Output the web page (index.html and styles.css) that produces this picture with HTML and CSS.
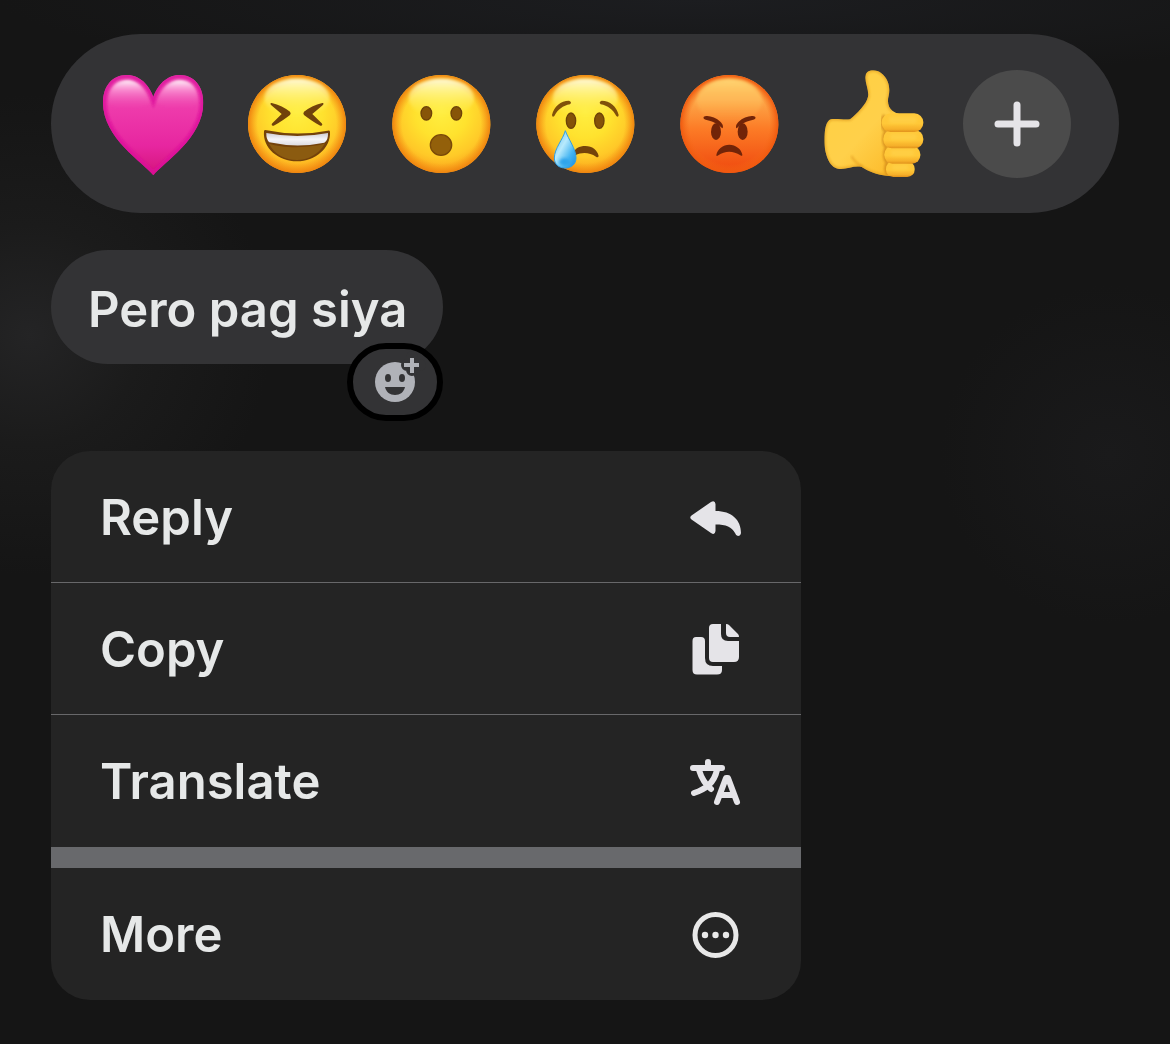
FILE: index.html
```html
<!DOCTYPE html>
<html lang="en">
<head>
<meta charset="utf-8">
<meta name="viewport" content="width=device-width, initial-scale=1">
<title>Message actions</title>
<link rel="stylesheet" href="styles.css">
</head>
<body>
<main class="screen">
  <div class="reactions" role="group" aria-label="Reactions">
    <button class="reaction" type="button" aria-label="Love">
      <svg viewBox="27 30 324 324" aria-hidden="true">
        <defs>
          <linearGradient id="heart" x1="0" y1="0" x2="0" y2="1"><stop offset="0" stop-color="#f060b8"/><stop offset=".35" stop-color="#ee3aab"/><stop offset=".7" stop-color="#e726a0"/><stop offset="1" stop-color="#d31479"/></linearGradient>
          <linearGradient id="heartShine" x1="0" y1="0" x2="0" y2="1"><stop offset="0" stop-color="#fff" stop-opacity=".95"/><stop offset=".35" stop-color="#ffb0e2" stop-opacity=".6"/><stop offset="1" stop-color="#f050b4" stop-opacity="0"/></linearGradient>
          <filter id="soft" x="-20%" y="-20%" width="140%" height="140%"><feGaussianBlur stdDeviation="4"/></filter>
          <filter id="edge" x="-10%" y="-10%" width="120%" height="120%"><feGaussianBlur stdDeviation="3"/></filter>
          <clipPath id="heartClip"><path d="M190 346C160 307 39 235 39 128C39 78 68 45 110 45C150 45 178 76 190 111C202 76 230 45 269 45C311 45 340 78 340 128C340 235 220 307 190 346Z"/></clipPath>
          <radialGradient id="yellow" cx=".5" cy=".38" r=".66"><stop offset="0" stop-color="#ffee40"/><stop offset=".4" stop-color="#ffe22e"/><stop offset=".7" stop-color="#ffc928"/><stop offset=".9" stop-color="#fba61c"/><stop offset="1" stop-color="#f18b14"/></radialGradient>
          <radialGradient id="rim" cx=".5" cy=".5" r=".5"><stop offset=".8" stop-color="#f69818" stop-opacity="0"/><stop offset="1" stop-color="#ef850f"/></radialGradient>
          <linearGradient id="shine" x1="0" y1="0" x2="0" y2="1"><stop offset="0" stop-color="#fffde2" stop-opacity=".95"/><stop offset=".5" stop-color="#fff795" stop-opacity=".5"/><stop offset="1" stop-color="#fff04a" stop-opacity="0"/></linearGradient>
          <linearGradient id="teeth" x1="0" y1="0" x2="0" y2="1"><stop offset="0" stop-color="#cfcdd2"/><stop offset=".5" stop-color="#f6f5f8"/><stop offset="1" stop-color="#dcdbe0"/></linearGradient>
          <linearGradient id="tear" x1="0" y1="0" x2="1" y2="1"><stop offset="0" stop-color="#55b9f0"/><stop offset=".4" stop-color="#b8eafc"/><stop offset=".7" stop-color="#45b5f2"/><stop offset="1" stop-color="#168be0"/></linearGradient>
          <linearGradient id="angry" x1="0" y1="0" x2="0" y2="1"><stop offset="0" stop-color="#fda73d"/><stop offset=".25" stop-color="#fda94a"/><stop offset=".55" stop-color="#fc7b26"/><stop offset="1" stop-color="#ef480e"/></linearGradient>
          <radialGradient id="angryRim" cx=".5" cy=".5" r=".5"><stop offset=".82" stop-color="#f56a18" stop-opacity="0"/><stop offset="1" stop-color="#f0590f"/></radialGradient>
          <linearGradient id="angryShine" x1="0" y1="0" x2="0" y2="1"><stop offset="0" stop-color="#ffd774"/><stop offset="1" stop-color="#ffae48" stop-opacity="0"/></linearGradient>
          <linearGradient id="hand" x1="0" y1="0" x2="1" y2="1"><stop offset="0" stop-color="#ffd040"/><stop offset=".5" stop-color="#ffd04a"/><stop offset=".75" stop-color="#fdbf31"/><stop offset="1" stop-color="#eb9a1c"/></linearGradient>
          <linearGradient id="finger" x1="0" y1="0" x2="0" y2="1"><stop offset="0" stop-color="#ffc93a"/><stop offset=".55" stop-color="#ffc838"/><stop offset=".85" stop-color="#f6b02a"/><stop offset="1" stop-color="#e0901a"/></linearGradient>
        </defs>
        <g clip-path="url(#heartClip)">
          <path fill="url(#heart)" d="M30 40H350V350H30Z"/>
          <path fill="url(#heartShine)" filter="url(#soft)" d="M56 132C52 88 76 60 112 60C148 60 168 92 182 127C150 150 80 150 56 132ZM198 127C212 92 232 60 270 60C306 60 328 88 323 132C298 150 230 150 198 127Z"/>
          <path fill="none" stroke="#dc109b" stroke-width="22" filter="url(#edge)" opacity=".75" d="M190 346C160 307 39 235 39 128C39 78 68 45 110 45C150 45 178 76 190 111C202 76 230 45 269 45C311 45 340 78 340 128C340 235 220 307 190 346Z"/>
        </g>
      </svg>
    </button>
    <button class="reaction" type="button" aria-label="Haha">
      <svg viewBox="24 30 324 324" aria-hidden="true">
        <circle cx="186" cy="192" r="147" fill="url(#yellow)"/><circle cx="186" cy="192" r="147" fill="url(#rim)"/>
        <ellipse cx="186" cy="114" rx="98" ry="58" fill="url(#shine)" filter="url(#soft)"/>
        <path fill="#71430b" d="M110 129C131 134 151 144 165 155Q169 160 165 165C151 176 134 188 116 197C111 199 108 194 112 190L140 162L109 136C105 132 106 128 110 129ZM262 129C241 134 221 144 207 155Q203 160 207 165C221 176 238 188 256 197C261 199 264 194 260 190L232 162L263 136C267 132 266 128 262 129Z"/>
        <path fill="#74420a" d="M87 213C82 265 131 304 186 304C241 304 288 263 285 215Q284 210 278 212Q186 230 95 211Q88 209 87 213Z"/>
        <path fill="#8b5b10" d="M102 251C142 265 229 265 270 250C251 284 219 300 186 300C151 300 119 284 102 251Z"/>
        <path fill="url(#teeth)" d="M94 219Q186 237 279 219Q280 241 268 248Q186 265 103 247Q93 238 94 219Z"/>
      </svg>
    </button>
    <button class="reaction" type="button" aria-label="Wow">
      <svg viewBox="27 30 324 324" aria-hidden="true">
        <circle cx="190" cy="192" r="147" fill="url(#yellow)"/><circle cx="190" cy="192" r="147" fill="url(#rim)"/>
        <ellipse cx="190" cy="114" rx="98" ry="58" fill="url(#shine)" filter="url(#soft)"/>
        <g fill="#875508" stroke="#6d4208" stroke-width="4"><ellipse cx="145" cy="160" rx="16" ry="20"/><ellipse cx="235" cy="160" rx="16" ry="20"/></g>
        <ellipse cx="189" cy="255" rx="32" ry="31" fill="#93600a" stroke="#7a4908" stroke-width="4"/>
      </svg>
    </button>
    <button class="reaction" type="button" aria-label="Sad">
      <svg viewBox="27 30 324 324" aria-hidden="true">
        <circle cx="190" cy="192" r="147" fill="url(#yellow)"/><circle cx="190" cy="192" r="147" fill="url(#rim)"/>
        <ellipse cx="190" cy="114" rx="98" ry="58" fill="url(#shine)" filter="url(#soft)"/>
        <g fill="#845308" stroke="#6d4208" stroke-width="4"><ellipse cx="147" cy="182" rx="14" ry="23"/><ellipse cx="232" cy="182" rx="14" ry="23"/></g>
        <path fill="#80500a" d="M90 165C96 139 116 122 141 122Q151 126 144 133C123 137 107 149 97 168Q91 174 90 165ZM290 165C284 139 264 122 239 122Q229 126 236 133C257 137 273 149 283 168Q289 174 290 165Z"/>
        <path fill="#75430a" d="M155 278C158 266 172 258 190 258C211 258 226 270 230 288Q228 294 222 290C203 277 180 275 160 286Z"/>
        <path fill="url(#tear)" stroke="#329fe4" stroke-width="3" d="M130 212C139 238 162 266 162 294C162 313 147 324 129 324C110 324 97 312 97 294C97 266 123 238 130 212Z"/>
        <ellipse cx="128" cy="306" rx="16" ry="11" fill="#2fa4ec" filter="url(#soft)"/>
      </svg>
    </button>
    <button class="reaction" type="button" aria-label="Angry">
      <svg viewBox="27 30 324 324" aria-hidden="true">
        <circle cx="190" cy="192" r="147" fill="url(#angry)"/><circle cx="190" cy="192" r="147" fill="url(#angryRim)"/>
        <ellipse cx="190" cy="122" rx="98" ry="66" fill="url(#angryShine)" filter="url(#soft)"/>
        <g fill="#722408"><ellipse cx="150" cy="215" rx="15" ry="25"/><ellipse cx="230" cy="215" rx="15" ry="25"/>
        <path d="M113 171C121 164 148 170 163 185C171 192 173 202 169 205C160 197 145 184 122 180Q110 177 113 171ZM268 171C260 164 233 170 218 185C210 192 208 202 212 205C221 197 236 184 259 180Q271 177 268 171Z"/>
        <path d="M151 285C154 267 171 254 190 254C209 254 226 267 229 284Q229 290 223 286C202 272 177 272 157 286Q151 290 151 285Z"/></g>
      </svg>
    </button>
    <button class="reaction" type="button" aria-label="Like">
      <svg viewBox="27 30 324 324" aria-hidden="true">
        <clipPath id="handClip"><path d="M63 178C79 175 104 181 120 178C143 159 169 133 174 110C178 91 163 65 167 47C169 29 197 26 213 39C237 57 241 86 236 107C231 126 235 144 248 153Q258 160 270 163L300 180L290 340L240 349C195 344 175 333 155 321C134 315 107 330 84 326C58 322 43 282 43 241C43 211 48 182 63 178Z"/></clipPath>
        <g clip-path="url(#handClip)">
          <path fill="url(#hand)" d="M40 25H345V352H40Z"/>
          <path fill="none" stroke="#e09a1c" stroke-width="9" opacity=".6" filter="url(#edge)" d="M63 178C79 175 104 181 120 178C143 159 169 133 174 110C178 91 163 65 167 47C169 29 197 26 213 39C237 57 241 86 236 107C231 126 235 144 248 153M240 349C195 344 175 333 155 321C134 315 107 330 84 326C58 322 43 282 43 241C43 211 48 182 63 178"/>
          <path fill="none" stroke="#d98b13" stroke-width="6" opacity=".5" filter="url(#edge)" d="M124 288Q135 308 158 321"/>
          <path fill="none" stroke="#c77c12" stroke-width="10" opacity=".65" filter="url(#edge)" d="M224 166C211 182 217 205 227 215C218 231 220 253 229 262C221 279 223 299 232 308C224 320 227 337 235 344"/>
        </g>
        <g fill="url(#finger)"><rect x="228" y="304" width="86" height="47" rx="22"/><rect x="223" y="258" width="108" height="53" rx="25"/><rect x="220" y="210" width="120" height="55" rx="26"/><rect x="215" y="160" width="125" height="56" rx="27"/></g>
        <g fill="#ffd24a" opacity=".7" filter="url(#soft)"><rect x="236" y="170" width="84" height="20" rx="10"/><rect x="240" y="221" width="80" height="18" rx="9"/><rect x="242" y="270" width="70" height="18" rx="9"/><rect x="246" y="315" width="50" height="14" rx="7"/></g>
      </svg>
    </button>
    <button class="reaction reaction-add" type="button" aria-label="More reactions">
      <svg viewBox="0 0 108 108" aria-hidden="true"><path d="M54 35V73M35 54H73" fill="none" stroke="#e5e4e8" stroke-width="7" stroke-linecap="round"/></svg>
    </button>
  </div>

  <div class="message">
    <p class="bubble">Pero pag siya</p>
    <button class="react-badge" type="button" aria-label="Add a reaction">
      <svg viewBox="0 0 84 66" aria-hidden="true">
        <circle cx="42" cy="33" r="20" fill="#b0b2b8"/>
        <path d="M59 8V21M54 16H67" stroke="#333335" stroke-width="12" stroke-linecap="round" fill="none"/>
        <path d="M59 9V24M51 16H66" stroke="#b0b2b8" stroke-width="4" fill="none"/>
        <ellipse cx="35" cy="29" rx="3" ry="4" fill="#333335"/><ellipse cx="49" cy="29" rx="3" ry="4" fill="#333335"/>
        <path d="M32 38H52C51 43 47 46 42 46S33 43 32 38Z" fill="#333335"/>
      </svg>
    </button>
  </div>

  <div class="menu" role="menu">
    <button class="item" type="button" role="menuitem"><span>Reply</span>
      <svg viewBox="0 0 90 80" aria-hidden="true"><path fill="#e5e4e8" d="M41 24Q45 22 45.500 26V33C62 33 71 42 71 55Q70.500 58 68 58Q66 58 65 55C62 49 56 46.500 45.500 46.500V53Q45 57.500 41 55L21.500 41.500Q19 39.500 21.500 37.500Z"/></svg>
    </button>
    <button class="item" type="button" role="menuitem"><span>Copy</span>
      <svg viewBox="0 0 90 80" aria-hidden="true"><path fill="#e5e4e8" d="M43 14H51V24Q51 31 58 31H69V47Q69 52 64 52H43Q39 52 39 48V18Q39 14 43 14ZM56 14Q58 14 59 15L68 24Q69 25 69 27H60Q56 27 56 23ZM26 27H31Q35 27 35 31V48Q35 56 43 56H52V60Q52 64.500 47 64.500H27Q22.500 64.500 22.500 60V31Q22.500 27 26 27Z"/></svg>
    </button>
    <button class="item" type="button" role="menuitem"><span>Translate</span>
      <svg viewBox="0 0 90 80" aria-hidden="true"><g fill="none" stroke="#e5e4e8" stroke-width="6" stroke-linecap="round" stroke-linejoin="round"><path d="M38 20V26M23 26H52M47 28C44 41 36 47 24 51M29 28C32 38 36 43 41 47"/><path d="M47 60L56 36H58L67 60M51 53H63"/></g></svg>
    </button>
    <button class="item item-more" type="button" role="menuitem"><span>More</span>
      <svg viewBox="0 0 90 80" aria-hidden="true"><circle cx="45.500" cy="40" r="20.500" fill="none" stroke="#e8e8e8" stroke-width="5"/><g fill="#e8e8e8"><circle cx="35" cy="40" r="3.200"/><circle cx="45.500" cy="40" r="3.200"/><circle cx="56" cy="40" r="3.200"/></g></svg>
    </button>
  </div>
</main>
</body>
</html>
```
FILE: styles.css
```css
* {
  box-sizing: border-box;
}

body {
  margin: 0;
  min-height: 100vh;
  color: #e6e8e8;
  font-family: Inter, "Liberation Sans", sans-serif;
  font-size: 49px;
  font-weight: 600;
  line-height: 60px;
  background:
    radial-gradient(circle at 30px 335px, #242425 0, #1b1b1b 110px, transparent 240px),
    radial-gradient(circle at 1110px 455px, #1a1a1b 0, transparent 170px),
    radial-gradient(ellipse 700px 80px at 700px 0, #1c1d20 0, transparent 100%),
    #151515;
}

button {
  margin: 0;
  padding: 0;
  border: 0;
  color: inherit;
  font: inherit;
  background: none;
  cursor: pointer;
}

svg {
  display: block;
}

.screen {
  display: flex;
  flex-direction: column;
  padding: 34px 51px 44px;
}

.reactions {
  display: flex;
  justify-content: space-between;
  padding: 36px 48px 35px;
  border-radius: 90px;
  background: #333335;
}

.reaction {
  width: 108px;
  height: 108px;
  border-radius: 50%;
}

.reaction svg {
  width: 100%;
}

.reaction-add {
  background: #4b4b4b;
}

.message {
  position: relative;
  align-self: flex-start;
  margin-top: 37px;
}

.bubble {
  margin: 0;
  padding: 30px 36px 24px 37px;
  border-radius: 57px;
  background: #333335;
}

.react-badge {
  position: absolute;
  right: 0;
  bottom: -57px;
  width: 96px;
  height: 78px;
  border: 6px solid #000;
  border-radius: 39px;
  background: #333335;
}

.menu {
  display: flex;
  flex-direction: column;
  width: 100%;
  max-width: 750px;
  margin-top: 87px;
  overflow: hidden;
  border-radius: 39px;
  background: #242424;
}

.item {
  display: flex;
  align-items: center;
  justify-content: space-between;
  height: 132px;
  padding: 2px 41px 0 49px;
  border-bottom: 1px solid #68686a;
  text-align: left;
}

.item:nth-last-child(2) {
  border-bottom: 0;
}

.item-more {
  height: 153px;
  border-top: 21px solid #68696c;
  border-bottom: 0;
}

.item svg {
  width: 90px;
  height: 80px;
}
```
